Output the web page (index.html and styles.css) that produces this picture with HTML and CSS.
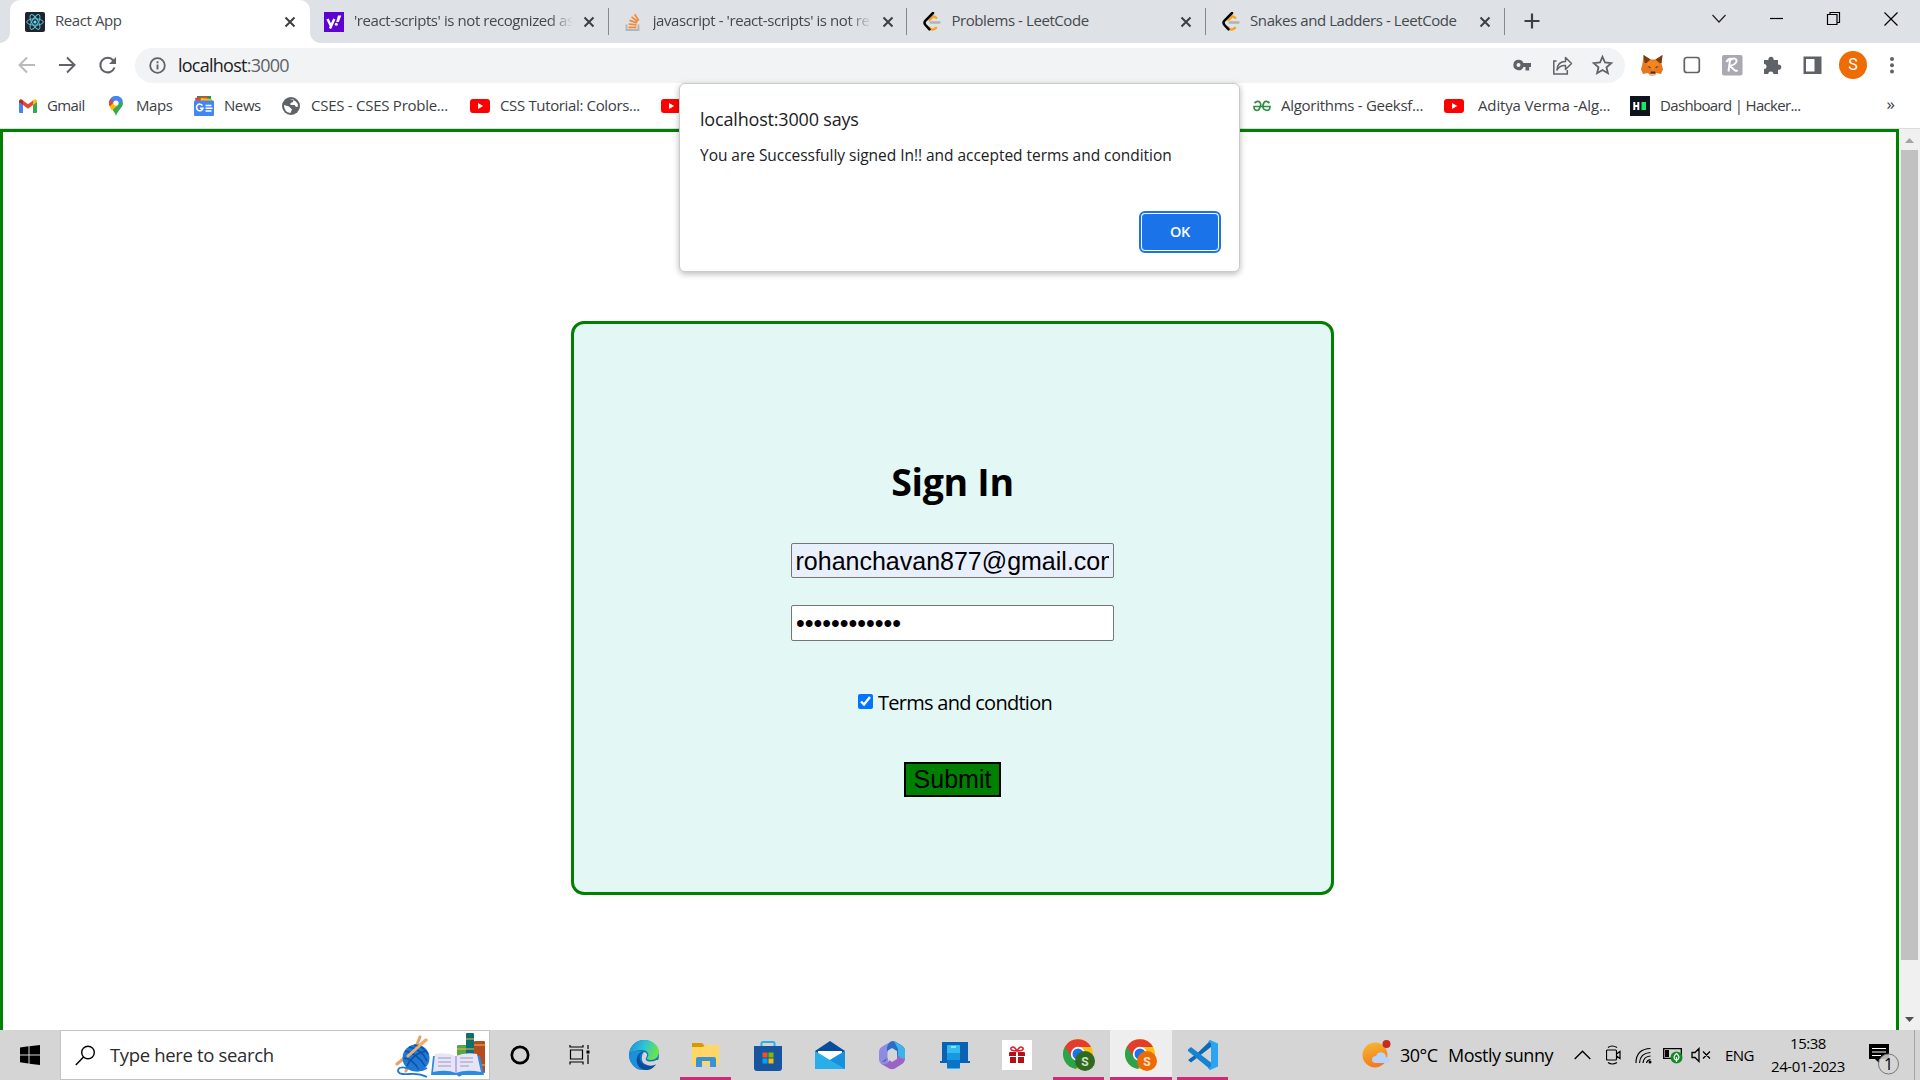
FILE: index.html
```html
<!DOCTYPE html>
<html lang="en">
<head>
<meta charset="utf-8">
<title>React App</title>
<link rel="stylesheet" href="styles.css">
</head>
<body>
<svg class="defs" width="0" height="0" aria-hidden="true">
  <symbol id="close" viewBox="0 0 12 12"><path d="M1.500 1.500l9 9M10.500 1.500l-9 9" stroke="#3c4043" stroke-width="2" fill="none"/></symbol>
  <symbol id="leet" viewBox="0 0 20 20"><path d="M8.500 8L12 4.600q1.400-.6 3.200 1.200M8.200 15.500q3 4 6.800.3" stroke="#ffa116" stroke-width="2.400" fill="none" stroke-linecap="round"/><path d="M9.500 10.500h9" stroke="#b3b3b3" stroke-width="2.300" stroke-linecap="round"/><path d="M12 1L4.500 8.500Q2.500 10.700 4.500 13l4 4.300" stroke="#000" stroke-width="2.500" fill="none" stroke-linecap="round"/></symbol>
  <symbol id="yt" viewBox="0 0 20 14"><rect width="20" height="14" rx="3" fill="#f00"/><path d="M8 4l5.200 3L8 10z" fill="#fff"/></symbol>
  <symbol id="chrome" viewBox="0 0 32 32"><circle cx="15" cy="15" r="15" fill="#fbc116"/><path d="M15 15L2 7.500A15 15 0 0 0 13 29.900l7-12z" fill="#2ba24c"/><path d="M2 7.500A15 15 0 0 1 28 8H15l-6.500 10z" fill="#e33b2e"/><circle cx="15" cy="15" r="7.200" fill="#fff"/><circle cx="15" cy="15" r="5.500" fill="#1a73e8"/></symbol>
</svg>

<header class="tabs">
  <div class="tab active">
    <svg class="fav" width="20" height="20" viewBox="0 0 20 20"><rect width="20" height="20" rx="2" fill="#20232a"/><g fill="none" stroke="#58c4dc" stroke-width="1"><ellipse cx="10" cy="10" rx="8.300" ry="3.200"/><ellipse cx="10" cy="10" rx="8.300" ry="3.200" transform="rotate(60 10 10)"/><ellipse cx="10" cy="10" rx="8.300" ry="3.200" transform="rotate(120 10 10)"/></g><circle cx="10" cy="10" r="1.600" fill="#61dafb"/></svg>
    <span class="title">React App</span>
    <svg class="x" width="12" height="12"><use href="#close"/></svg>
  </div>
  <div class="tab">
    <svg class="fav" width="20" height="20" viewBox="0 0 20 20"><rect width="20" height="20" fill="#5f01d1"/><path d="M3.500 7l3.200 6.500M10.300 7L6 16.500" stroke="#fff" stroke-width="2.500" fill="none"/><path d="M14 3.500h3.300l-2.500 6.500h-2.600z" fill="#fff"/><circle cx="12.300" cy="12.300" r="1.500" fill="#fff"/></svg>
    <span class="title fade">'react-scripts' is not recognized as</span>
    <svg class="x" width="12" height="12"><use href="#close"/></svg>
  </div>
  <div class="tab">
    <svg class="fav" width="20" height="20" viewBox="0 0 20 20"><path d="M3.500 12.500v5.500h12v-5.500" fill="none" stroke="#b0b5bb" stroke-width="1.800"/><path d="M5.500 15.300h8M5.700 12l7.800.9M6.500 8.400l7.500 2.500M8.500 4.900l6.200 4.600M11.600 2.300l4.200 6.200" stroke="#f58735" stroke-width="1.700"/></svg>
    <span class="title fade">javascript - 'react-scripts' is not re</span>
    <svg class="x" width="12" height="12"><use href="#close"/></svg>
  </div>
  <div class="tab">
    <svg class="fav" width="20" height="20"><use href="#leet"/></svg>
    <span class="title">Problems - LeetCode</span>
    <svg class="x" width="12" height="12"><use href="#close"/></svg>
  </div>
  <div class="tab">
    <svg class="fav" width="20" height="20"><use href="#leet"/></svg>
    <span class="title">Snakes and Ladders - LeetCode</span>
    <svg class="x" width="12" height="12"><use href="#close"/></svg>
  </div>
  <svg class="plus" width="16" height="16" viewBox="0 0 16 16"><path d="M8 .5v15M.5 8h15" stroke="#3c4043" stroke-width="2.200"/></svg>
  <div class="window-buttons">
    <svg width="58" height="36" viewBox="0 0 58 36"><path d="M24.500 15l6.500 7 6.500-7" fill="none" stroke="#222" stroke-width="1.200"/></svg>
    <svg width="58" height="36" viewBox="0 0 58 36"><path d="M24 18.500h13" stroke="#000" stroke-width="1.200"/></svg>
    <svg width="58" height="36" viewBox="0 0 58 36"><path d="M23.500 14.500h9.500v10h-9.500zM26 14.500v-2h9.500v10H33" fill="none" stroke="#000" stroke-width="1.200"/></svg>
    <svg width="58" height="36" viewBox="0 0 58 36"><path d="M22.500 12.500l13 13M35.500 12.500l-13 13" stroke="#000" stroke-width="1.200"/></svg>
  </div>
</header>

<nav class="toolbar">
  <svg width="40" height="24" viewBox="0 0 40 24"><path d="M27 12H12M19 4.500L11.500 12l7.500 7.500" stroke="#bababc" stroke-width="2" fill="none"/></svg>
  <svg width="40" height="24" viewBox="0 0 40 24"><path d="M11 12h15M19 4.500l7.500 7.500-7.500 7.500" stroke="#5f6368" stroke-width="2" fill="none"/></svg>
  <svg width="40" height="24" viewBox="0 0 40 24"><path d="M25.300 7.500A7.300 7.300 0 1 0 26.500 14.500" stroke="#5f6368" stroke-width="2.100" fill="none"/><path d="M28 4v7h-7z" fill="#5f6368"/></svg>
  <div class="omnibox">
    <svg width="17" height="17" viewBox="0 0 17 17"><circle cx="8.500" cy="8.500" r="7.300" fill="none" stroke="#5f6368" stroke-width="1.800"/><path d="M8.500 7.500v5M8.500 4.300v1.900" stroke="#5f6368" stroke-width="1.900"/></svg>
    <span class="url"><b>localhost</b>:3000</span>
    <svg class="omni-first" width="40" height="24" viewBox="0 0 40 24"><path fill-rule="evenodd" d="M16.500 6.800a5.200 5.200 0 0 1 4.900 3.300H29v3.800h-1.800v3.500h-3.700v-3.500h-2.100A5.200 5.200 0 1 1 16.500 6.800zM16.500 10a2 2 0 1 0 0 4 2 2 0 0 0 0-4z" fill="#5f6368"/></svg>
    <svg width="40" height="24" viewBox="0 0 40 24"><path d="M14.500 8h-2.700v13h13.500v-4" fill="none" stroke="#5f6368" stroke-width="1.500"/><path d="M15 17q.5-8.500 8.500-8.500V4.500l6 6-6 6v-4q-5.500-.5-8.500 4.500z" fill="none" stroke="#5f6368" stroke-width="1.500" stroke-linejoin="round"/></svg>
    <svg width="40" height="24" viewBox="0 0 40 24"><path d="M20.500 3.800l2.500 5.700 6.200.6-4.700 4.100 1.400 6-5.400-3.200-5.400 3.200 1.400-6-4.700-4.100 6.200-.6z" fill="none" stroke="#5f6368" stroke-width="1.800"/></svg>
  </div>
  <svg class="ext" width="40" height="24" viewBox="0 0 40 24"><path d="M10.500 2l7 4.500h5l7-4.500-1 8.500 1.500 6-2 4.500-5-1-2 2.500h-4l-2-2.500-5 1-2-4.500 1.500-6z" fill="#e87722"/><path d="M10.500 2l7 4.500-4 3.500h-2zM29.500 2l-7 4.500 4 3.500h2z" fill="#763d16"/><path d="M13 12l5 2 2 5 2-5 5-2-3-4h-8z" fill="#f6851b"/><path d="M14.500 13l3 1-.5 1.200zM25.500 13l-3 1 .5 1.200z" fill="#233447"/><path d="M18 18.500h4l.7 2h-5.400z" fill="#4a3023"/><path d="M16 21h8l-1.500 1.500h-5z" fill="#d7c1b3"/></svg>
  <svg width="40" height="24" viewBox="0 0 40 24"><rect x="12.300" y="4.500" width="15" height="15" rx="2.500" fill="#fff" stroke="#5f6368" stroke-width="1.700"/></svg>
  <svg width="40" height="24" viewBox="0 0 40 24"><rect x="10" y="2" width="20.500" height="20.500" rx="2" fill="#aaa9b2"/><path d="M16.500 18.500L18 7q6-3 6.500.5T18 13l5 4.500q1.500 1 2.500-.5M14.500 9q1-3 5-3.500" stroke="#fff" stroke-width="2" fill="none"/></svg>
  <svg width="40" height="24" viewBox="0 0 40 24"><path d="M12 7h4.500a2.600 2.600 0 1 1 5 0H26v4.700a2.600 2.600 0 1 1 0 5V21h-4.700a2.500 2.500 0 1 0-5 0H12v-5a2.500 2.500 0 1 0 0-5z" fill="#5f6368"/></svg>
  <svg width="40" height="24" viewBox="0 0 40 24"><path fill-rule="evenodd" d="M11.500 3.500h18v17.500h-18zM14 6v12.500h8.500V6z" fill="#5f6368"/></svg>
  <div class="avatar">S</div>
  <svg class="menu" width="6" height="20" viewBox="0 0 6 20"><circle cx="3" cy="4" r="2" fill="#5f6368"/><circle cx="3" cy="10.300" r="2" fill="#5f6368"/><circle cx="3" cy="16.600" r="2" fill="#5f6368"/></svg>
</nav>

<nav class="bookmarks">
  <a class="bm gmail"><svg width="18" height="14" viewBox="0 0 18 14"><path d="M0 2.500V13q0 1 1 1h3V5z" fill="#4285f4"/><path d="M18 2.500V13q0 1-1 1h-3V5z" fill="#34a853"/><path d="M14 1.500V6l4-3V2q-1-3-4-.5z" fill="#fbbc04"/><path d="M4 1.500L9 5.300l5-3.800V6L9 9.700 4 6z" fill="#ea4335"/><path d="M4 1.500V6L0 3V2q1-3 4-.5z" fill="#c5221f"/></svg><span>Gmail</span></a>
  <a class="bm maps"><svg width="14" height="20" viewBox="0 0 14 20"><path d="M7 0a7 7 0 0 1 7 7c0 5-5 6.500-7 13C5 13.500 0 12 0 7a7 7 0 0 1 7-7z" fill="#34a853"/><path d="M7 0a7 7 0 0 1 6.600 4.500L7 10.500 1.200 3.200A7 7 0 0 1 7 0z" fill="#4285f4"/><path d="M1.400 3L5 6 .8 10.500A7 7 0 0 1 1.400 3z" fill="#ea4335"/><path d="M.8 10.500L5 6l4 3-6 5.500q-1.500-2-2.200-4z" fill="#fbbc04"/><circle cx="7" cy="7" r="2.600" fill="#fff"/></svg><span>Maps</span></a>
  <a class="bm news"><svg width="20" height="20" viewBox="0 0 20 20"><path d="M3 0h14v7H3z" fill="#0c9d58"/><path d="M1 2l12-2 2 7H2z" fill="#ea4335"/><path d="M7 2l11 1v4H6z" fill="#ffc107"/><rect y="4.500" width="20" height="15.500" rx="1" fill="#4285f4"/><path d="M8.500 9.500A3.300 3.300 0 1 0 9 12.300H6M11.500 9.500h6M11.500 12.300h7M11.500 15h6" stroke="#fff" stroke-width="1.500" fill="none"/></svg><span>News</span></a>
  <a class="bm cses"><svg width="18" height="18" viewBox="0 0 18 18"><circle cx="9" cy="9" r="9" fill="#5f6368"/><path d="M2 8l5 1.500 3 3L8.500 16Q2 15 2 8zM7.500 2.200h4L11 5 8.500 6v2h4l1.500 2 2-.5Q16 3 7.500 2.200z" fill="#fff"/></svg><span>CSES - CSES Proble...</span></a>
  <a class="bm css"><svg width="20" height="14"><use href="#yt"/></svg><span>CSS Tutorial: Colors...</span></a>
  <a class="bm covered"><svg width="20" height="14"><use href="#yt"/></svg></a>
  <a class="bm geeks"><svg width="18" height="12" viewBox="0 0 18 12"><path d="M1.500 3Q5 0 7 2.500T5.500 10Q1 11.500 1 6.500h16q0 5-4.500 3.500T11 2.500Q13 0 16.500 3" fill="none" stroke="#2f8d46" stroke-width="1.700"/></svg><span>Algorithms - Geeksf...</span></a>
  <a class="bm aditya"><svg width="20" height="14"><use href="#yt"/></svg><span>Aditya Verma -Alg...</span></a>
  <a class="bm hacker"><svg width="20" height="20" viewBox="0 0 20 20"><rect width="20" height="20" fill="#0e141e"/><path d="M4.300 6v8M8.300 6v8M4 10h4.500" stroke="#fff" stroke-width="2"/><path d="M11.500 6h4.500v8h-4.500z" fill="#1be46a"/></svg><span>Dashboard | Hacker...</span></a>
  <span class="more">»</span>
</nav>

<main class="viewport">
  <div class="page">
    <form class="card">
      <h2>Sign In</h2>
      <input class="field email" type="text" value="rohanchavan877@gmail.com">
      <input class="field password" type="password" value="abcdefghijkl">
      <label class="terms"><input type="checkbox" checked><span>Terms and condtion</span></label>
      <button class="submit" type="button">Submit</button>
    </form>
  </div>
  <div class="scrollbar">
    <svg width="21" height="21" viewBox="0 0 21 21"><path d="M6 14h9l-4.500-5z" fill="#a3a3a3"/></svg>
    <div class="thumb"></div>
    <svg class="down" width="21" height="21" viewBox="0 0 21 21"><path d="M6 8h9l-4.500 5z" fill="#505050"/></svg>
  </div>
</main>

<section class="dialog">
  <div class="dialog-title">localhost:3000 says</div>
  <div class="dialog-text">You are Successfully signed In!! and accepted terms and condition</div>
  <button class="ok" type="button">OK</button>
</section>

<footer class="taskbar">
  <div class="start"><svg width="20" height="20" viewBox="0 0 20 20"><path d="M0 2.500l8.500-1.200v8.200H0zM9.500 1.200L20 0v9.500H9.500zM0 10.500h8.500v8L0 17.300zM9.500 10.500H20V20l-10.500-1.300z"/></svg></div>
  <div class="search">
    <svg width="21" height="21" viewBox="0 0 21 21"><circle cx="13" cy="7.500" r="6.300" fill="none" stroke="#000" stroke-width="1.400"/><path d="M8.500 12L.8 20" stroke="#000" stroke-width="1.500"/></svg>
    <span>Type here to search</span>
    <svg class="art" width="92" height="48" viewBox="0 0 92 48">
      <path d="M2 33L31 9M11 40L25 6" stroke="#e8a165" stroke-width="3" stroke-linecap="round"/>
      <circle cx="21" cy="27" r="13.500" fill="#1f78d4"/><path d="M10 20q12 2 20 15M14 16q13 2 18 14M9 27q9 1 15 12M19 14q9 1 14 9M12 35q6-13 19-15" stroke="#0c51a5" stroke-width="1.400" fill="none"/><path d="M13 25L31 9" stroke="#f0ad72" stroke-width="3" stroke-linecap="round"/><path d="M32 37q-8 5-20 0-9-2-9 3 1 4 11 3t18 3" stroke="#1f78d4" stroke-width="1.800" fill="none"/>
      <rect x="62" y="14" width="10" height="26" rx="1" fill="#58a646"/><rect x="71" y="2" width="8" height="38" rx="1" fill="#0e6e70"/><rect x="79" y="10" width="11" height="32" rx="1" fill="#b34c1e"/><path d="M62 18h10M71 8h8M79 14h11M79 34h11M71 18h8" stroke="#eebb48" stroke-width="1.200"/>
      <path d="M38 25h47l4 19H67q-3 3-5 0H36z" fill="#2b8be0"/><path d="M40 23q12-2 21 2 9-4 21-2l4 18q-15-3-25 1-9-4-23-1z" fill="#e7e4fa"/><path d="M61 25v17" stroke="#b8b0e2" stroke-width="2"/><path d="M43 27h13M43 31h13M43 35h13M65 27h13M65 31h13M65 35h9" stroke="#9a9ab6" stroke-width="1.200"/>
    </svg>
  </div>
  <div class="cell"><svg width="20" height="20" viewBox="0 0 20 20"><circle cx="10" cy="10" r="8.200" fill="none" stroke="#000" stroke-width="2.700"/></svg></div>
  <div class="cell"><svg width="22" height="20" viewBox="0 0 22 20"><path d="M1.500 5h12v9h-12zM1 0v2h13V0M1 19.500v-2.500h13v2.500M19 0v4M19 9.500v9.500" stroke="#000" stroke-width="1.200" fill="none"/><path d="M17.500 5.500h3v3h-3z"/></svg></div>
  <div class="app first"><svg width="30" height="30" viewBox="0 0 30 30"><defs><linearGradient id="eg" x1="0" x2="1" y1="0" y2=".3"><stop stop-color="#168bd8"/><stop offset=".55" stop-color="#30c3d5"/><stop offset="1" stop-color="#66e34f"/></linearGradient></defs><circle cx="15" cy="15" r="15" fill="#1272c6"/><path d="M0 14C1 5 8 0 15 0c9 0 15 6 15 12 0 5-4 8-8 8-3 0-4.500-1-4-2 3-3 1-8-5-8-6 0-11 2-13 4z" fill="url(#eg)"/><path d="M13 11q-9 6-4 14 3 5 8 5-13 2-17-13 2-8 13-6z" fill="#1b91dc"/><path d="M14 12q-5 3-3 8c3 7 11 7 17 3q-5 8-12 7Q7 28 8 19q1-6 6-7z" fill="#0d4c98"/><path d="M17 18c-1 2 1 3.500 4 3.500q4 0 6.500-1.500h2.500l-2 4q-7 3.500-13-.5-3-3-2-7 0-3 2-4.500 5 1 2 6z" fill="#d6d6d6"/></svg></div>
  <div class="app running"><svg width="30" height="26" viewBox="0 0 30 26"><path d="M1 1h10l3 3-3 3H1z" fill="#d99a00"/><path d="M1 5h11l2-2h14v20H1z" fill="#ffd767"/><path d="M5 25v-8q0-2 2-2h16q2 0 2 2v8h-6v-6h-8v6z" fill="#3a91d4"/></svg></div>
  <div class="app"><svg width="30" height="31" viewBox="0 0 30 31"><path d="M8.500 8V3.500Q8.500 2 10 2h10q1.500 0 1.500 1.500V8" fill="none" stroke="#25b2ec" stroke-width="2"/><path d="M1 6h28v22q0 3-3 3H4q-3 0-3-3z" fill="#17569f"/><path d="M9.500 12.500h5v5h-5z" fill="#f25022"/><path d="M15.500 12.500h5v5h-5z" fill="#7fba00"/><path d="M9.500 18.500h5v5h-5z" fill="#00a4ef"/><path d="M15.500 18.500h5v5h-5z" fill="#ffb900"/></svg></div>
  <div class="app"><svg width="30" height="30" viewBox="0 0 30 30"><path d="M0 11L15 1l15 10v3H0z" fill="#084d99"/><path d="M3 11h24v9H3z" fill="#fff"/><path d="M0 11l15 9 15-9v18H0z" fill="#2aaeea"/><path d="M30 11v18L15 20z" fill="#1990db"/></svg></div>
  <div class="app"><svg width="28" height="30" viewBox="0 0 28 30"><path d="M14 1L5 6Q1 8 1 12v7q0 4 4 6l4 2 1-6V11z" fill="#8f8be0"/><path d="M13 1.500q2-1 4 0l6 3.500q4 2.500 4 6v8l-8-3v-5l-5-3-5 3v7L4 22q5 0 5-5V9q0-5 4-7.500z" fill="#2a6cc6"/><path d="M16 1l7 4q4 2.500 4 6v8l-7-3V9z" fill="#3bb4ea"/><path d="M27 18q0 4-3 6l-7 4.500q-3 1.500-6 0L4 24q6 1 7-4l3 2 5-3v-4q6 5 8 3z" fill="#9a63c6"/><path d="M14 9.500l4.500 2.800v5.400L14 20.500l-4.500-2.800v-5.400z" fill="#d5d5d5"/></svg></div>
  <div class="app"><svg width="30" height="28" viewBox="0 0 30 28"><path d="M2 1h26v19h2v2H0v-2h2z" fill="#0a62b3"/><rect x="7" y="4" width="13" height="24" rx="1" fill="#31bdf3"/><path d="M7 12h13v7H7z" fill="#1998e2"/><path d="M7 19h13v8H7z" fill="#0875c7"/><path d="M11 6h5" stroke="#fff"/></svg></div>
  <div class="app"><svg width="30" height="30" viewBox="0 0 30 30"><path d="M0 0h30v30H0z" fill="#fff"/><path d="M8 12h6v4H7v-3q0-1 1-1zM16 12h6q1 0 1 1v3h-7zM8 17h6v6H8zM16 17h6v6h-6z" fill="#b60d17"/><path d="M15 11Q8 11 9 8q3-3 6 3 3-6 6-3 1 3-6 3z" fill="none" stroke="#d5262d" stroke-width="1.600"/></svg></div>
  <div class="app running"><svg width="32" height="32" viewBox="0 0 32 32"><use href="#chrome"/><circle cx="22" cy="22" r="10" fill="#306a1e"/><text x="22" y="26.500" class="badge-s" fill="#cfe0ca">S</text></svg></div>
  <div class="app running current"><svg width="32" height="32" viewBox="0 0 32 32"><use href="#chrome"/><circle cx="22" cy="22" r="10" fill="#ee6a05"/><text x="22" y="26.500" class="badge-s" fill="#fbe3d0">S</text></svg></div>
  <div class="app running"><svg width="30" height="30" viewBox="0 0 30 30"><path d="M0 20l3 2.500L23 7V0L9.500 13z" fill="#0e69b4"/><path d="M0 9.500L3 7l20 15.500V30L0 11z" fill="#1583cf"/><path d="M22 0l8 3.500v23L22 30l-2-1.500 3-2V3.500l-3-2z" fill="#29a5f2"/></svg></div>
  <div class="tray">
    <svg class="weather" width="30" height="30" viewBox="0 0 30 30"><defs><linearGradient id="sun" x1="0" x2=".3" y1="0" y2="1"><stop stop-color="#f3bd32"/><stop offset="1" stop-color="#f47a1d"/></linearGradient></defs><circle cx="13" cy="15" r="12.500" fill="url(#sun)"/><path d="M14 23q-4 0-4-3.500t4-3.500q2-5 6.500-3.500 3.500 1 3.500 4.500 4 .5 3.500 3.500T24 23z" fill="#b9d2f8"/><circle cx="24.500" cy="4" r="4" fill="#c62b20"/></svg>
    <span class="temp">30°C</span><span class="cond">Mostly sunny</span>
    <svg class="up" width="17" height="10" viewBox="0 0 17 10"><path d="M.7 9L8.500 1.200 16.300 9" fill="none" stroke="#000" stroke-width="1.400"/></svg>
    <svg class="cam" width="16" height="20" viewBox="0 0 16 20"><path d="M1.500 5h8q1 0 1 1v8q0 1-1 1h-8q-1 0-1-1V6q0-1 1-1zM10.500 9l3.500-2.500v7L10.500 11M2 2.500q4-3 9 0M2 17.500q4 3 9 0" fill="none" stroke="#000" stroke-width="1.200"/></svg>
    <svg class="wifi" width="17" height="17" viewBox="0 0 17 17"><path d="M1 16Q1 2 15.500 1.500M4.500 16Q5 6 15.500 5.500M8 16q.5-6.500 7.500-7M11.500 16q.5-3 4-3.500" fill="none" stroke="#000" stroke-width="1.200"/><circle cx="15" cy="15" r="1.500"/></svg>
    <svg class="battery" width="20" height="18" viewBox="0 0 20 18"><path d="M.7 2.700h17.600v9.600H.7z" fill="none" stroke="#000" stroke-width="1.300"/><path d="M2 4h4v7H2z"/><circle cx="13.500" cy="11.500" r="6" fill="#128b26"/><path d="M13.500 7.500q5 4 0 7-5-3 0-7zM13.500 11v5" stroke="#fff" stroke-width="1.200" fill="none"/></svg>
    <svg class="speaker" width="21" height="16" viewBox="0 0 21 16"><path d="M1 5.500v5h3l4 4v-13l-4 4zM12 4.500l7 7M19 4.500l-7 7" fill="none" stroke="#000" stroke-width="1.300"/></svg>
    <span class="lang">ENG</span>
    <div class="clock"><span>15:38</span><span class="date">24-01-2023</span></div>
    <svg class="notif" width="31" height="32" viewBox="0 0 31 32"><path d="M0 0h20v15H10v4l-4-4H0z"/><path d="M3 4.500h14M3 8h14M3 11.500h9" stroke="#fff" stroke-width="1.200"/><circle cx="19.500" cy="20" r="10" fill="#d5d5d5" fill-opacity=".85" stroke="#777" stroke-width="1"/><text x="19.500" y="25.500" class="badge-n">1</text></svg>
  </div>
</footer>
</body>
</html>
```
FILE: styles.css
```css
* { box-sizing: border-box; }
html, body { margin: 0; width: 1920px; height: 1080px; overflow: hidden; }
body { display: flex; flex-direction: column; position: relative; background: #fff; color: #000; font-family: "Open Sans", "Noto Sans", sans-serif; white-space: nowrap; }
svg { display: block; flex: none; }
.defs { position: absolute; }

/* tab strip */
.tabs { display: flex; height: 43px; padding-left: 10px; background: #dee1e6; flex: none; }
.tab { display: flex; align-items: center; position: relative; width: 298.7px; height: 43px; padding-left: 14px; font-size: 15px; letter-spacing: -.42px; color: #45494d; }
.tab.active { width: 300px; padding-left: 15px; background: #fff; border-radius: 10px 10px 0 0; }
.tab.active::before, .tab.active::after { content: ""; position: absolute; bottom: 0; width: 10px; height: 10px; }
.tab.active::before { left: -10px; background: radial-gradient(circle at 0 0, #dee1e6 9.500px, #fff 10px); }
.tab.active::after { right: -10px; background: radial-gradient(circle at 100% 0, #dee1e6 9.500px, #fff 10px); }
.tab:not(.active) { border-right: 1px solid transparent; border-image: linear-gradient(transparent 9px, #85888d 9px, #85888d 34px, transparent 34px) 1; }
.title { width: 220px; margin-left: 10px; line-height: 24px; padding-bottom: 3px; }
.fade { -webkit-mask-image: linear-gradient(90deg, #000 195px, transparent 219px); mask-image: linear-gradient(90deg, #000 195px, transparent 219px); }
.x { margin-left: 9px; }
.plus { margin: 13px 0 0 19px; }
.window-buttons { display: flex; margin-left: auto; }

/* address row */
.toolbar { display: flex; align-items: center; height: 44px; padding-left: 8px; flex: none; background: #fff; }
.omnibox { display: flex; align-items: center; width: 1490px; height: 35px; margin-left: 7px; padding-left: 14px; padding-right: 3px; border-radius: 18px; background: #f1f3f4; }
.url { margin-left: 12px; font-size: 18px; letter-spacing: -.75px; color: #5f6368; }
.url b { font-weight: 400; color: #202124; }
.omni-first { margin-left: auto; }
.ext { margin-left: 8px; margin-right: -1px; }
.avatar { width: 28px; height: 28px; margin-left: 7px; border-radius: 50%; background: #ee6c02; color: #fff; font: 16px/28px Roboto, sans-serif; text-align: center; }
.menu { margin-left: 22px; }

/* bookmarks */
.bookmarks { display: flex; align-items: center; height: 42px; padding-bottom: 4px; border-bottom: 1px solid #dadce0; flex: none; background: #fff; }
.bm { display: flex; align-items: center; font-size: 15px; line-height: 22px; letter-spacing: -.42px; color: #3c4043; }
.bm span { padding-bottom: 2px; }
.gmail { width: 91px; padding-left: 19px; gap: 10px; margin-right: 18px; letter-spacing: -.6px; }
.maps { width: 85px; gap: 13px; }
.news { width: 88px; gap: 10px; }
.cses { width: 188px; gap: 11px; letter-spacing: -.26px; }
.css { width: 191px; gap: 10px; letter-spacing: -.35px; }
.covered { width: 592px; }
.geeks { width: 191px; gap: 10px; letter-spacing: -.28px; }
.aditya { width: 186px; gap: 14px; letter-spacing: -.14px; }
.hacker { gap: 10px; letter-spacing: -.66px; }
.more { margin: 0 25px 4px auto; font-size: 17px; color: #3c4043; }

/* page */
.viewport { display: flex; flex: none; height: 901px; }
.page { width: 1899px; height: 901px; overflow: hidden; border: 3px solid #008000; border-bottom: 0; padding: 189px 0 0 568px; background: #fff; }
.card { display: flex; flex-direction: column; align-items: center; width: 763px; height: 574px; border: 3px solid #008000; border-radius: 13px; background: #e3f7f5; padding-top: 133px; }
.card h2 { margin: 0; height: 50px; font-size: 37.500px; line-height: 50px; letter-spacing: -.3px; font-weight: 700; }
.field { width: 323px; padding: 1px 4px; border: 1px solid #767676; border-radius: 2px; outline: 0; font: 25px/30px "Liberation Sans", Arial, sans-serif; color: #000; background: #fff; }
.email { height: 35px; margin-top: 36px; padding: 2px 4px 0 3.500px; background: #e8f0fe; }
.password { height: 36px; margin-top: 27px; }
.terms { display: flex; align-items: center; height: 30px; margin: 46px 0 0 5px; gap: 5px; font-size: 20px; letter-spacing: -.72px; }
.terms input { width: 15px; height: 15px; margin: 0 0 2px; accent-color: #0075ff; }
.submit { width: 97px; height: 35px; margin-top: 45px; padding: 0 0 1px; border: 2px solid #000; border-radius: 0; background: #008000; color: #000; font: 25px/29px "Liberation Sans", Arial, sans-serif; }
.scrollbar { display: flex; flex-direction: column; width: 21px; background: #f0f0f0; }
.thumb { width: 17px; height: 810px; margin-left: 2px; background: #c1c1c1; }
.down { margin-top: auto; }

/* alert, over the page */
.dialog { position: absolute; left: 679px; top: 83px; width: 561px; height: 189px; padding: 22px 20px 0 20px; border: 1px solid #c9cccd; border-radius: 6px; background: #fff; box-shadow: 0 2px 6px rgba(0,0,0,.28); display: flex; flex-direction: column; color: #202124; }
.dialog-title { font-size: 18px; line-height: 26px; letter-spacing: -.18px; }
.dialog-text { margin-top: 11px; font-size: 15.500px; line-height: 24px; letter-spacing: -.04px; }
.ok { align-self: flex-end; width: 78px; height: 38px; margin: 46px 0 0; padding: 0 0 2px; border: 1px solid #fff; outline: 2px solid #1a73e8; border-radius: 4px; background: #1a73e8; color: #fff; font: 600 14.500px "Open Sans", sans-serif; letter-spacing: -.4px; }

/* taskbar */
.taskbar { display: flex; height: 50px; background: #d5d5d5; flex: none; }
.start { display: flex; width: 60px; align-items: center; justify-content: center; }
.search { display: flex; align-items: center; width: 430px; border: 1px solid #c3c3c3; background: #fff; padding-left: 14px; font-size: 18.500px; color: #2b2b2b; letter-spacing: -.34px; }
.search span { margin-left: 14px; padding-bottom: 2px; }
.art { margin: 0 2px 0 auto; }
.cell { display: flex; width: 60px; align-items: center; justify-content: center; }
.first { margin-left: 3px; }
.app { display: flex; width: 62.100px; align-items: center; justify-content: center; position: relative; }
.running::after { content: ""; position: absolute; left: 5px; right: 6px; bottom: 0; height: 3px; background: #cb2b78; }
.current { background: #eee; }
.current::after { left: 0; right: 0; }
.badge-s { font: 700 12px Roboto, sans-serif; text-anchor: middle; }
.badge-n { font: 16px "Open Sans", sans-serif; text-anchor: middle; }
.tray { display: flex; align-items: center; margin-left: auto; width: 558px; }
.temp { margin-left: 8px; width: 48px; font-size: 18px; letter-spacing: -.5px; }
.cond { width: 126px; font-size: 18px; letter-spacing: -.5px; }
.cam { margin-left: 15px; }
.wifi { margin-left: 13px; }
.battery { margin-left: 11px; }
.speaker { margin-left: 8px; }
.lang { margin-left: 13px; width: 30px; font-size: 15px; letter-spacing: -.6px; }
.clock { display: flex; flex-direction: column; width: 76px; margin-left: 15px; text-align: center; font-size: 15px; line-height: 23px; letter-spacing: -.45px; }
.notif { margin: 10px 0 0 23px; }
.tray::after { content: ""; width: 1px; height: 50px; margin-left: 14px; background: #a5a5a5; }
```
